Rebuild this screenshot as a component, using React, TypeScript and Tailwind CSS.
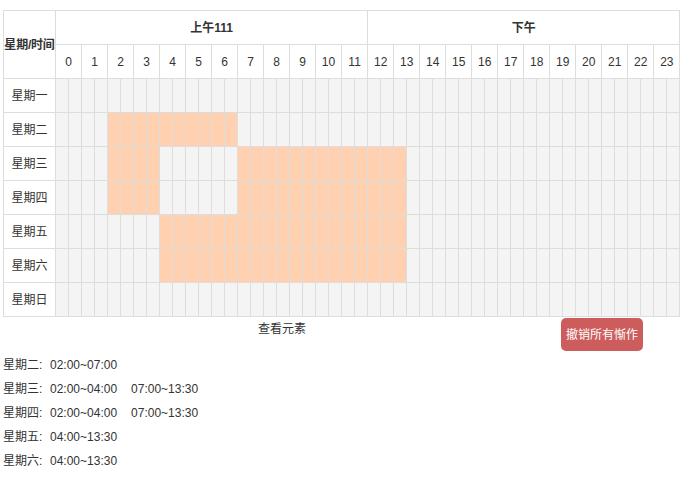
import React from "react";

const days = ["星期一", "星期二", "星期三", "星期四", "星期五", "星期六", "星期日"];

const ranges: number[][][] = [
  [],
  [[4, 13]],
  [[4, 7], [14, 26]],
  [[4, 7], [14, 26]],
  [[8, 26]],
  [[8, 26]],
  [],
];

const isSel = (d: number, c: number) => ranges[d].some(([a, b]) => c >= a && c <= b);

const summary: [string, string[]][] = [
  ["星期二", ["02:00~07:00"]],
  ["星期三", ["02:00~04:00", "07:00~13:30"]],
  ["星期四", ["02:00~04:00", "07:00~13:30"]],
  ["星期五", ["04:00~13:30"]],
  ["星期六", ["04:00~13:30"]],
];

const font = { fontFamily: '"Liberation Sans", "Noto Sans CJK SC", sans-serif' };

export default function App() {
  const halves = Array.from({ length: 48 }, (_, i) => i);
  const hours = Array.from({ length: 24 }, (_, i) => i);
  return (
    <div className="bg-white w-[697px] h-[495px] pl-[3px] pt-[10px] text-[12px] text-[#333]" style={font}>
      <table className="table-fixed border-collapse w-[677px] border border-[#ddd]">
        <colgroup>
          <col className="w-[52px]" />
          {halves.map((i) => (
            <col key={i} className="w-[13px]" />
          ))}
        </colgroup>
        <thead>
          <tr className="h-[34px]">
            <th
              rowSpan={2}
              className="border border-[#ddd] font-bold p-0 text-[12px] text-[#333] whitespace-nowrap overflow-visible tracking-[-0.2px]"
            >
              星期/时间
            </th>
            <th colSpan={24} className="border border-[#ddd] font-bold p-0">
              上午111
            </th>
            <th colSpan={24} className="border border-[#ddd] font-bold p-0">
              下午
            </th>
          </tr>
          <tr className="h-[34px]">
            {hours.map((h) => (
              <td key={h} colSpan={2} className="border border-[#ddd] text-center p-0 text-[#333]">
                {h}
              </td>
            ))}
          </tr>
        </thead>
        <tbody>
          {days.map((d, di) => (
            <tr key={d} className="h-[34px]">
              <td className="border border-[#ddd] text-center p-0">{d}</td>
              {halves.map((c) => (
                <td
                  key={c}
                  className={`border border-[#ddd] p-0 ${isSel(di, c) ? "bg-[#ffd1b1]" : "bg-[#f4f4f4]"}`}
                />
              ))}
            </tr>
          ))}
        </tbody>
      </table>
      <div className="flex w-[677px] items-start">
        <div className="flex-1 text-center leading-[24px]">查看元素</div>
        <button
          className="mt-[1px] mr-[37px] h-[33px] w-[82px] rounded-[5px] bg-[#cd5c5c] text-white text-[12px] flex items-center justify-center whitespace-nowrap"
          style={font}
        >
          撤销所有惭作
        </button>
      </div>
      <div className="mt-[2px]">
        {summary.map(([d, rs]) => (
          <div key={d} className="flex leading-[24px] h-[24px]">
            <span className="w-[47px]">{d}:</span>
            {rs.map((r) => (
              <span key={r} className="mr-[14px]">
                {r}
              </span>
            ))}
          </div>
        ))}
      </div>
    </div>
  );
}
